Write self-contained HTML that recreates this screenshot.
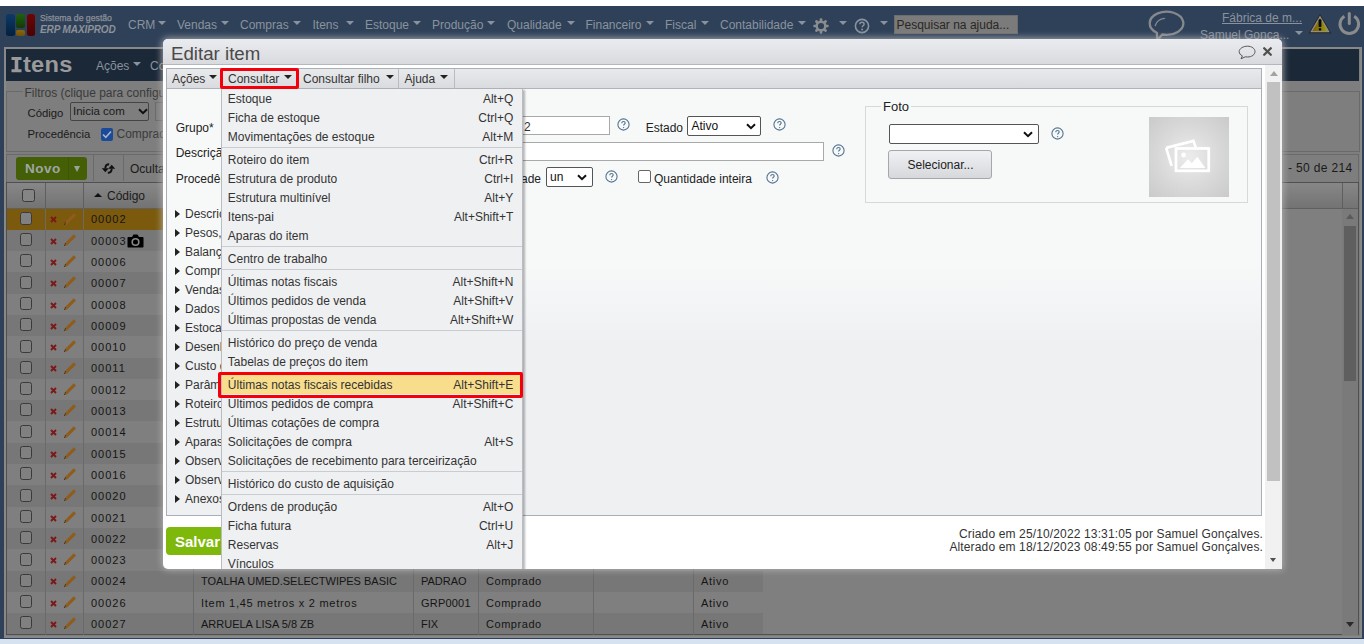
<!DOCTYPE html>
<html><head><meta charset="utf-8">
<style>
*{box-sizing:border-box;margin:0;padding:0}
html,body{width:1364px;height:644px;overflow:hidden;background:#fff;font-family:"Liberation Sans",sans-serif;font-size:12px;color:#222}
.a{position:absolute}
.nw{white-space:nowrap}
#navy{left:0;top:6px;width:1364px;height:633px;background:#2f4159}
#btm{left:0;top:639px;width:1364px;height:5px;background:#d7e2f1}
.tri{display:inline-block;width:0;height:0;border-left:4.5px solid transparent;border-right:4.5px solid transparent;border-top:5px solid currentColor;vertical-align:middle}
.nav{top:18px;font-size:12px;color:#8a939d;line-height:14px}
.navtri{top:21px;width:0;height:0;border-left:4.5px solid transparent;border-right:4.5px solid transparent;border-top:4.5px solid #8a939d}
</style></head><body>
<div class="a" id="navy"></div>
<div class="a" id="btm"></div>

<!-- logo -->
<div class="a" style="left:6px;top:14px;width:8.6px;height:22px;background:linear-gradient(#0c3a68,#03203e);border-radius:2.5px"></div>
<div class="a" style="left:16.3px;top:14px;width:8.7px;height:14px;background:linear-gradient(#225e10,#143a07);border-radius:2.5px"></div>
<div class="a" style="left:16.3px;top:30px;width:8.7px;height:6px;background:linear-gradient(#8a680c,#6f5206);border-radius:2px"></div>
<div class="a" style="left:26.7px;top:14px;width:8.4px;height:22px;background:linear-gradient(#6e0505,#4a0202);border-radius:2.5px"></div>
<div class="a nw" style="left:40px;top:12.5px;font-size:8.7px;color:#8d9198;line-height:10px;-webkit-text-stroke:0.25px #8d9198">Sistema de gestão</div>
<div class="a nw" style="left:40px;top:23.5px;font-size:10px;font-weight:bold;font-style:italic;color:#8d9198;line-height:12px;letter-spacing:-0.1px">ERP MAXIPROD</div>
<!-- nav -->
<div class="a nav nw" style="left:128px">CRM</div><div class="a navtri" style="left:157.5px"></div>
<div class="a nav nw" style="left:177px">Vendas</div><div class="a navtri" style="left:220.5px"></div>
<div class="a nav nw" style="left:240px">Compras</div><div class="a navtri" style="left:293px"></div>
<div class="a nav nw" style="left:312.5px">Itens</div><div class="a navtri" style="left:345.5px"></div>
<div class="a nav nw" style="left:365px">Estoque</div><div class="a navtri" style="left:412.5px"></div>
<div class="a nav nw" style="left:432px">Produção</div><div class="a navtri" style="left:487px"></div>
<div class="a nav nw" style="left:507px">Qualidade</div><div class="a navtri" style="left:566.5px"></div>
<div class="a nav nw" style="left:585.5px">Financeiro</div><div class="a navtri" style="left:645.5px"></div>
<div class="a nav nw" style="left:665px">Fiscal</div><div class="a navtri" style="left:700.5px"></div>
<div class="a nav nw" style="left:720px">Contabilidade</div><div class="a navtri" style="left:797.5px"></div>

<!-- gear -->
<svg class="a" style="left:812px;top:17px" width="18" height="18" viewBox="0 0 18 18"><circle cx="9" cy="9" r="4.3" fill="none" stroke="#8a8d90" stroke-width="2.4"/><rect x="7.7" y="1.3" width="2.6" height="3.6" rx="1" fill="#8a8d90"/><rect x="7.7" y="1.3" width="2.6" height="3.6" rx="1" fill="#8a8d90" transform="rotate(45 9 9)"/><rect x="7.7" y="1.3" width="2.6" height="3.6" rx="1" fill="#8a8d90" transform="rotate(90 9 9)"/><rect x="7.7" y="1.3" width="2.6" height="3.6" rx="1" fill="#8a8d90" transform="rotate(135 9 9)"/><rect x="7.7" y="1.3" width="2.6" height="3.6" rx="1" fill="#8a8d90" transform="rotate(180 9 9)"/><rect x="7.7" y="1.3" width="2.6" height="3.6" rx="1" fill="#8a8d90" transform="rotate(225 9 9)"/><rect x="7.7" y="1.3" width="2.6" height="3.6" rx="1" fill="#8a8d90" transform="rotate(270 9 9)"/><rect x="7.7" y="1.3" width="2.6" height="3.6" rx="1" fill="#8a8d90" transform="rotate(315 9 9)"/></svg>
<div class="a navtri" style="left:838.7px"></div>
<svg class="a" style="left:854px;top:18px" width="16" height="16" viewBox="0 0 16 16"><circle cx="8" cy="8" r="6.6" fill="none" stroke="#8a939d" stroke-width="1.6"/><path d="M5.9 6.3c0-1.3 1-2.1 2.1-2.1s2.1.8 2.1 2c0 1.5-2 1.6-2 3.1" fill="none" stroke="#8a939d" stroke-width="1.5"/><circle cx="8.1" cy="11.6" r="1" fill="#8a939d"/></svg>
<div class="a navtri" style="left:879.5px"></div>
<div class="a nw" style="left:894px;top:15px;width:124px;height:19px;background:#7b7b7b;border:1px solid #6d6d6d;font-size:12px;line-height:18px;padding-left:1.5px;color:#2a2722">Pesquisar na ajuda...</div>

<!-- chat bubble top -->
<svg class="a" style="left:1146px;top:8px" width="42" height="34" viewBox="0 0 42 34"><path d="M10.9 24.8A16.8 11.6 0 1 1 16.2 26.5L11.2 32.5z" fill="none" stroke="#85898d" stroke-width="2.3" stroke-linejoin="round"/><path d="M9.3 17.5C10.5 13.5 14 11 18.5 10.4" fill="none" stroke="#85898d" stroke-width="1.4" stroke-linecap="round"/></svg>
<div class="a nw" style="left:1222px;top:11px;font-size:12px;color:#8a939d;text-decoration:underline;line-height:14px">Fábrica de m...</div>
<div class="a nw" style="left:1200px;top:28px;font-size:12px;color:#8a939d;line-height:14px">Samuel Gonça...</div>
<div class="a navtri" style="left:1295px;top:31px"></div>
<svg class="a" style="left:1308px;top:12.5px" width="24" height="21" viewBox="0 0 24 21"><defs><linearGradient id="wg" x1="0" x2="1" y1="0" y2="0"><stop offset="0" stop-color="#7d5a06"/><stop offset="1" stop-color="#9a9e08"/></linearGradient></defs><path d="M12 1L23.3 20.2H0.7z" fill="#222" /><path d="M12 2.6L21.8 19.3H2.2z" fill="#8f8f86"/><path d="M12 5L19.6 18.1H4.4z" fill="url(#wg)"/><rect x="10.6" y="6.3" width="2.8" height="7.6" rx=".6" fill="#080808"/><rect x="10.8" y="15.2" width="2.4" height="2.3" fill="#080808"/></svg>
<svg class="a" style="left:1337px;top:12px" width="25" height="25" viewBox="0 0 25 25"><path d="M7.4 4.3A9.3 9.3 0 1 0 17.2 4.3" fill="none" stroke="#8a8b8c" stroke-width="3"/><path d="M12.3 1.6v10" stroke="#8a8b8c" stroke-width="3" stroke-linecap="round"/></svg>

<!-- main panel -->
<div class="a" style="left:3.5px;top:46.5px;width:1358px;height:591px;background:#7e7e7e;border:2.5px solid #888"></div>
<div class="a" style="left:6px;top:49px;width:1353px;height:32px;background:#1b2838"></div>
<svg class="a" style="left:11px;top:57.2px" width="11" height="16" viewBox="0 0 11 16"><path d="M0.5 0h10v2.9H7.3v9.4h3.2v2.9h-10v-2.9h3.2V2.9H0.5z" fill="#9a9a9a"/></svg>
<div class="a nw" style="left:22.5px;top:52.7px;font-size:21.5px;font-weight:bold;color:#9a9a9a;line-height:24px;letter-spacing:0.2px;transform:scaleX(1.1);transform-origin:0 0">tens</div>
<div class="a nw" style="left:96px;top:59px;font-size:12px;color:#8a939d;line-height:14px">Ações</div><div class="a navtri" style="left:132.8px;top:62px;border-left-width:4.2px;border-right-width:4.2px;border-top-width:4.3px"></div>
<div class="a nw" style="left:150px;top:59px;font-size:12px;color:#8a939d;line-height:14px">Consultar</div>

<!-- filters -->
<div class="a" style="left:6px;top:91px;width:1354px;height:60.5px;border:1px solid #6a6a6a"></div>
<div class="a nw" style="left:22.5px;top:87.3px;font-size:12px;color:#3a3a3a;background:#7e7e7e;padding:0 2px;line-height:13px">Filtros (clique para configurar)</div>
<div class="a nw" style="left:27.5px;top:107px;color:#1a1a1a;line-height:13px;font-size:11.3px">Código</div>
<div class="a" style="left:69.5px;top:101.5px;width:79px;height:19px;border:1px solid #444;border-radius:2px;background:#7e7e7e"></div>
<div class="a nw" style="left:73px;top:105px;color:#1a1a1a;line-height:13px;font-size:11.5px">Inicia com</div>
<div class="a" style="left:154.5px;top:101.5px;width:100px;height:19px;border:1px solid #6a6a6a;background:#7e7e7e"></div>
<div class="a nw" style="left:27.5px;top:128px;color:#1a1a1a;line-height:13px;font-size:11.3px">Procedência</div>
<div class="a" style="left:100.5px;top:128px;width:12.5px;height:13px;background:#1b4a9a;border-radius:2px"></div>
<div class="a nw" style="left:116.5px;top:128px;color:#3a3a3a;line-height:13px">Comprado</div>
<svg class="a" style="left:102px;top:130px" width="10" height="9" viewBox="0 0 10 9"><path d="M1 4.5l2.8 2.8L9 1.5" fill="none" stroke="#aab4c4" stroke-width="1.6"/></svg>
<svg class="a" style="left:138px;top:108px" width="10" height="7" viewBox="0 0 10 7"><path d="M1 1.2l4 4 4-4" fill="none" stroke="#111" stroke-width="2"/></svg>

<!-- toolbar -->
<div class="a" style="left:6px;top:154px;width:1353px;height:28.5px;border:1px solid #6a6a6a;border-bottom:none"></div>
<div class="a" style="left:16px;top:157px;width:71px;height:23px;background:#445f06;border-radius:3px"></div>
<div class="a" style="left:67.5px;top:157px;width:1px;height:23px;background:#3c5506"></div>
<div class="a nw" style="left:25px;top:161px;font-size:13.5px;font-weight:bold;color:#a0a6a6;line-height:15px;letter-spacing:0.5px">Novo</div>
<div class="a" style="left:73.5px;top:166px;width:0;height:0;border-left:3.5px solid transparent;border-right:3.5px solid transparent;border-top:6px solid #9aa39a"></div>
<div class="a" style="left:93px;top:155px;width:1px;height:26px;background:#6a6a6a"></div>
<div class="a" style="left:123px;top:155px;width:1px;height:26px;background:#6a6a6a"></div>
<svg class="a" style="left:100.5px;top:162.5px" width="15" height="11" viewBox="0 0 15 11"><path d="M8.2 1.3C5.6 1.3 4.3 2.6 4.3 5.6" fill="none" stroke="#111" stroke-width="1.9"/><path d="M0.8 5.2h7L4.3 9.2z" fill="#111"/><path d="M6.8 9.7c2.6 0 3.9-1.3 3.9-4.3" fill="none" stroke="#111" stroke-width="1.9"/><path d="M7.2 5.8h7L10.7 1.8z" fill="#111"/></svg>
<div class="a nw" style="left:130px;top:162px;font-size:12px;color:#1a1a1a;line-height:14px">Ocultar</div>
<div class="a nw" style="left:1288px;top:160.5px;font-size:12px;color:#1a1a1a;line-height:14px;letter-spacing:0.35px">- 50 de 214</div>
<div class="a nw" style="left:1275px;top:160.5px;font-size:12px;color:#1a1a1a;line-height:14px">1</div>
<div class="a" style="left:6px;top:182px;width:1353px;height:453px;border:1px solid #505050;background:#7f7f7f"></div>
<div class="a" style="left:7px;top:183px;width:1351px;height:25.5px;background:linear-gradient(#878787,#737373);border-bottom:1px solid #5f5f5f"></div>
<div class="a" style="left:45px;top:183px;width:1px;height:25px;background:#5f5f5f"></div>
<div class="a" style="left:83px;top:183px;width:1px;height:25px;background:#5f5f5f"></div>
<div class="a" style="left:1342px;top:183px;width:1px;height:25px;background:#5f5f5f"></div>
<div class="a" style="left:22px;top:189px;width:13px;height:13px;border:1px solid #3a3a3a;border-radius:2.5px;background:#858585"></div>
<div class="a" style="left:94px;top:193px;width:0;height:0;border-left:4px solid transparent;border-right:4px solid transparent;border-bottom:4.5px solid #111"></div>
<div class="a nw" style="left:107px;top:189px;font-size:12px;color:#1a1a1a;line-height:14px">Código</div>
<div class="a" style="left:7px;top:208.50px;width:756px;height:21.3px;background:#7c5a0d"></div>
<div class="a" style="left:19.5px;top:211.70px;width:12.5px;height:13px;border:1px solid #3a3a3a;border-radius:2.5px;background:#808080"></div>
<svg class="a" style="left:49.5px;top:216.30px" width="7" height="7" viewBox="0 0 7 7"><path d="M1 1L6 6M6 1L1 6" stroke="#7e1818" stroke-width="1.9"/></svg>
<svg class="a" style="left:62px;top:211.50px" width="15" height="15" viewBox="0 0 15 15"><path d="M11.8 1.2l2.2 2.2-8.8 8.8-2.9.9.8-3z" fill="#8f5c1c"/><path d="M2.3 13.1l.8-3 .7.7z" fill="#222"/><path d="M2.3 13.1l.3-1.1.8.8z" fill="#111"/></svg>
<div class="a nw" style="left:91px;top:213.30px;font-size:11px;color:#151515;line-height:13px;letter-spacing:1.0px">00002</div>
<div class="a" style="left:7px;top:229.80px;width:756px;height:21.3px;background:#777777"></div>
<div class="a" style="left:19.5px;top:233.00px;width:12.5px;height:13px;border:1px solid #3a3a3a;border-radius:2.5px;background:#808080"></div>
<svg class="a" style="left:49.5px;top:237.60px" width="7" height="7" viewBox="0 0 7 7"><path d="M1 1L6 6M6 1L1 6" stroke="#7e1818" stroke-width="1.9"/></svg>
<svg class="a" style="left:62px;top:232.80px" width="15" height="15" viewBox="0 0 15 15"><path d="M11.8 1.2l2.2 2.2-8.8 8.8-2.9.9.8-3z" fill="#8f5c1c"/><path d="M2.3 13.1l.8-3 .7.7z" fill="#222"/><path d="M2.3 13.1l.3-1.1.8.8z" fill="#111"/></svg>
<div class="a nw" style="left:91px;top:234.60px;font-size:11px;color:#151515;line-height:13px;letter-spacing:1.0px">00003</div>
<div class="a" style="left:19.5px;top:254.30px;width:12.5px;height:13px;border:1px solid #3a3a3a;border-radius:2.5px;background:#808080"></div>
<svg class="a" style="left:49.5px;top:258.90px" width="7" height="7" viewBox="0 0 7 7"><path d="M1 1L6 6M6 1L1 6" stroke="#7e1818" stroke-width="1.9"/></svg>
<svg class="a" style="left:62px;top:254.10px" width="15" height="15" viewBox="0 0 15 15"><path d="M11.8 1.2l2.2 2.2-8.8 8.8-2.9.9.8-3z" fill="#8f5c1c"/><path d="M2.3 13.1l.8-3 .7.7z" fill="#222"/><path d="M2.3 13.1l.3-1.1.8.8z" fill="#111"/></svg>
<div class="a nw" style="left:91px;top:255.90px;font-size:11px;color:#151515;line-height:13px;letter-spacing:1.0px">00006</div>
<div class="a" style="left:7px;top:272.40px;width:756px;height:21.3px;background:#777777"></div>
<div class="a" style="left:19.5px;top:275.60px;width:12.5px;height:13px;border:1px solid #3a3a3a;border-radius:2.5px;background:#808080"></div>
<svg class="a" style="left:49.5px;top:280.20px" width="7" height="7" viewBox="0 0 7 7"><path d="M1 1L6 6M6 1L1 6" stroke="#7e1818" stroke-width="1.9"/></svg>
<svg class="a" style="left:62px;top:275.40px" width="15" height="15" viewBox="0 0 15 15"><path d="M11.8 1.2l2.2 2.2-8.8 8.8-2.9.9.8-3z" fill="#8f5c1c"/><path d="M2.3 13.1l.8-3 .7.7z" fill="#222"/><path d="M2.3 13.1l.3-1.1.8.8z" fill="#111"/></svg>
<div class="a nw" style="left:91px;top:277.20px;font-size:11px;color:#151515;line-height:13px;letter-spacing:1.0px">00007</div>
<div class="a" style="left:19.5px;top:296.90px;width:12.5px;height:13px;border:1px solid #3a3a3a;border-radius:2.5px;background:#808080"></div>
<svg class="a" style="left:49.5px;top:301.50px" width="7" height="7" viewBox="0 0 7 7"><path d="M1 1L6 6M6 1L1 6" stroke="#7e1818" stroke-width="1.9"/></svg>
<svg class="a" style="left:62px;top:296.70px" width="15" height="15" viewBox="0 0 15 15"><path d="M11.8 1.2l2.2 2.2-8.8 8.8-2.9.9.8-3z" fill="#8f5c1c"/><path d="M2.3 13.1l.8-3 .7.7z" fill="#222"/><path d="M2.3 13.1l.3-1.1.8.8z" fill="#111"/></svg>
<div class="a nw" style="left:91px;top:298.50px;font-size:11px;color:#151515;line-height:13px;letter-spacing:1.0px">00008</div>
<div class="a" style="left:7px;top:315.00px;width:756px;height:21.3px;background:#777777"></div>
<div class="a" style="left:19.5px;top:318.20px;width:12.5px;height:13px;border:1px solid #3a3a3a;border-radius:2.5px;background:#808080"></div>
<svg class="a" style="left:49.5px;top:322.80px" width="7" height="7" viewBox="0 0 7 7"><path d="M1 1L6 6M6 1L1 6" stroke="#7e1818" stroke-width="1.9"/></svg>
<svg class="a" style="left:62px;top:318.00px" width="15" height="15" viewBox="0 0 15 15"><path d="M11.8 1.2l2.2 2.2-8.8 8.8-2.9.9.8-3z" fill="#8f5c1c"/><path d="M2.3 13.1l.8-3 .7.7z" fill="#222"/><path d="M2.3 13.1l.3-1.1.8.8z" fill="#111"/></svg>
<div class="a nw" style="left:91px;top:319.80px;font-size:11px;color:#151515;line-height:13px;letter-spacing:1.0px">00009</div>
<div class="a" style="left:19.5px;top:339.50px;width:12.5px;height:13px;border:1px solid #3a3a3a;border-radius:2.5px;background:#808080"></div>
<svg class="a" style="left:49.5px;top:344.10px" width="7" height="7" viewBox="0 0 7 7"><path d="M1 1L6 6M6 1L1 6" stroke="#7e1818" stroke-width="1.9"/></svg>
<svg class="a" style="left:62px;top:339.30px" width="15" height="15" viewBox="0 0 15 15"><path d="M11.8 1.2l2.2 2.2-8.8 8.8-2.9.9.8-3z" fill="#8f5c1c"/><path d="M2.3 13.1l.8-3 .7.7z" fill="#222"/><path d="M2.3 13.1l.3-1.1.8.8z" fill="#111"/></svg>
<div class="a nw" style="left:91px;top:341.10px;font-size:11px;color:#151515;line-height:13px;letter-spacing:1.0px">00010</div>
<div class="a" style="left:7px;top:357.60px;width:756px;height:21.3px;background:#777777"></div>
<div class="a" style="left:19.5px;top:360.80px;width:12.5px;height:13px;border:1px solid #3a3a3a;border-radius:2.5px;background:#808080"></div>
<svg class="a" style="left:49.5px;top:365.40px" width="7" height="7" viewBox="0 0 7 7"><path d="M1 1L6 6M6 1L1 6" stroke="#7e1818" stroke-width="1.9"/></svg>
<svg class="a" style="left:62px;top:360.60px" width="15" height="15" viewBox="0 0 15 15"><path d="M11.8 1.2l2.2 2.2-8.8 8.8-2.9.9.8-3z" fill="#8f5c1c"/><path d="M2.3 13.1l.8-3 .7.7z" fill="#222"/><path d="M2.3 13.1l.3-1.1.8.8z" fill="#111"/></svg>
<div class="a nw" style="left:91px;top:362.40px;font-size:11px;color:#151515;line-height:13px;letter-spacing:1.0px">00011</div>
<div class="a" style="left:19.5px;top:382.10px;width:12.5px;height:13px;border:1px solid #3a3a3a;border-radius:2.5px;background:#808080"></div>
<svg class="a" style="left:49.5px;top:386.70px" width="7" height="7" viewBox="0 0 7 7"><path d="M1 1L6 6M6 1L1 6" stroke="#7e1818" stroke-width="1.9"/></svg>
<svg class="a" style="left:62px;top:381.90px" width="15" height="15" viewBox="0 0 15 15"><path d="M11.8 1.2l2.2 2.2-8.8 8.8-2.9.9.8-3z" fill="#8f5c1c"/><path d="M2.3 13.1l.8-3 .7.7z" fill="#222"/><path d="M2.3 13.1l.3-1.1.8.8z" fill="#111"/></svg>
<div class="a nw" style="left:91px;top:383.70px;font-size:11px;color:#151515;line-height:13px;letter-spacing:1.0px">00012</div>
<div class="a" style="left:7px;top:400.20px;width:756px;height:21.3px;background:#777777"></div>
<div class="a" style="left:19.5px;top:403.40px;width:12.5px;height:13px;border:1px solid #3a3a3a;border-radius:2.5px;background:#808080"></div>
<svg class="a" style="left:49.5px;top:408.00px" width="7" height="7" viewBox="0 0 7 7"><path d="M1 1L6 6M6 1L1 6" stroke="#7e1818" stroke-width="1.9"/></svg>
<svg class="a" style="left:62px;top:403.20px" width="15" height="15" viewBox="0 0 15 15"><path d="M11.8 1.2l2.2 2.2-8.8 8.8-2.9.9.8-3z" fill="#8f5c1c"/><path d="M2.3 13.1l.8-3 .7.7z" fill="#222"/><path d="M2.3 13.1l.3-1.1.8.8z" fill="#111"/></svg>
<div class="a nw" style="left:91px;top:405.00px;font-size:11px;color:#151515;line-height:13px;letter-spacing:1.0px">00013</div>
<div class="a" style="left:19.5px;top:424.70px;width:12.5px;height:13px;border:1px solid #3a3a3a;border-radius:2.5px;background:#808080"></div>
<svg class="a" style="left:49.5px;top:429.30px" width="7" height="7" viewBox="0 0 7 7"><path d="M1 1L6 6M6 1L1 6" stroke="#7e1818" stroke-width="1.9"/></svg>
<svg class="a" style="left:62px;top:424.50px" width="15" height="15" viewBox="0 0 15 15"><path d="M11.8 1.2l2.2 2.2-8.8 8.8-2.9.9.8-3z" fill="#8f5c1c"/><path d="M2.3 13.1l.8-3 .7.7z" fill="#222"/><path d="M2.3 13.1l.3-1.1.8.8z" fill="#111"/></svg>
<div class="a nw" style="left:91px;top:426.30px;font-size:11px;color:#151515;line-height:13px;letter-spacing:1.0px">00014</div>
<div class="a" style="left:7px;top:442.80px;width:756px;height:21.3px;background:#777777"></div>
<div class="a" style="left:19.5px;top:446.00px;width:12.5px;height:13px;border:1px solid #3a3a3a;border-radius:2.5px;background:#808080"></div>
<svg class="a" style="left:49.5px;top:450.60px" width="7" height="7" viewBox="0 0 7 7"><path d="M1 1L6 6M6 1L1 6" stroke="#7e1818" stroke-width="1.9"/></svg>
<svg class="a" style="left:62px;top:445.80px" width="15" height="15" viewBox="0 0 15 15"><path d="M11.8 1.2l2.2 2.2-8.8 8.8-2.9.9.8-3z" fill="#8f5c1c"/><path d="M2.3 13.1l.8-3 .7.7z" fill="#222"/><path d="M2.3 13.1l.3-1.1.8.8z" fill="#111"/></svg>
<div class="a nw" style="left:91px;top:447.60px;font-size:11px;color:#151515;line-height:13px;letter-spacing:1.0px">00015</div>
<div class="a" style="left:19.5px;top:467.30px;width:12.5px;height:13px;border:1px solid #3a3a3a;border-radius:2.5px;background:#808080"></div>
<svg class="a" style="left:49.5px;top:471.90px" width="7" height="7" viewBox="0 0 7 7"><path d="M1 1L6 6M6 1L1 6" stroke="#7e1818" stroke-width="1.9"/></svg>
<svg class="a" style="left:62px;top:467.10px" width="15" height="15" viewBox="0 0 15 15"><path d="M11.8 1.2l2.2 2.2-8.8 8.8-2.9.9.8-3z" fill="#8f5c1c"/><path d="M2.3 13.1l.8-3 .7.7z" fill="#222"/><path d="M2.3 13.1l.3-1.1.8.8z" fill="#111"/></svg>
<div class="a nw" style="left:91px;top:468.90px;font-size:11px;color:#151515;line-height:13px;letter-spacing:1.0px">00016</div>
<div class="a" style="left:7px;top:485.40px;width:756px;height:21.3px;background:#777777"></div>
<div class="a" style="left:19.5px;top:488.60px;width:12.5px;height:13px;border:1px solid #3a3a3a;border-radius:2.5px;background:#808080"></div>
<svg class="a" style="left:49.5px;top:493.20px" width="7" height="7" viewBox="0 0 7 7"><path d="M1 1L6 6M6 1L1 6" stroke="#7e1818" stroke-width="1.9"/></svg>
<svg class="a" style="left:62px;top:488.40px" width="15" height="15" viewBox="0 0 15 15"><path d="M11.8 1.2l2.2 2.2-8.8 8.8-2.9.9.8-3z" fill="#8f5c1c"/><path d="M2.3 13.1l.8-3 .7.7z" fill="#222"/><path d="M2.3 13.1l.3-1.1.8.8z" fill="#111"/></svg>
<div class="a nw" style="left:91px;top:490.20px;font-size:11px;color:#151515;line-height:13px;letter-spacing:1.0px">00020</div>
<div class="a" style="left:19.5px;top:509.90px;width:12.5px;height:13px;border:1px solid #3a3a3a;border-radius:2.5px;background:#808080"></div>
<svg class="a" style="left:49.5px;top:514.50px" width="7" height="7" viewBox="0 0 7 7"><path d="M1 1L6 6M6 1L1 6" stroke="#7e1818" stroke-width="1.9"/></svg>
<svg class="a" style="left:62px;top:509.70px" width="15" height="15" viewBox="0 0 15 15"><path d="M11.8 1.2l2.2 2.2-8.8 8.8-2.9.9.8-3z" fill="#8f5c1c"/><path d="M2.3 13.1l.8-3 .7.7z" fill="#222"/><path d="M2.3 13.1l.3-1.1.8.8z" fill="#111"/></svg>
<div class="a nw" style="left:91px;top:511.50px;font-size:11px;color:#151515;line-height:13px;letter-spacing:1.0px">00021</div>
<div class="a" style="left:7px;top:528.00px;width:756px;height:21.3px;background:#777777"></div>
<div class="a" style="left:19.5px;top:531.20px;width:12.5px;height:13px;border:1px solid #3a3a3a;border-radius:2.5px;background:#808080"></div>
<svg class="a" style="left:49.5px;top:535.80px" width="7" height="7" viewBox="0 0 7 7"><path d="M1 1L6 6M6 1L1 6" stroke="#7e1818" stroke-width="1.9"/></svg>
<svg class="a" style="left:62px;top:531.00px" width="15" height="15" viewBox="0 0 15 15"><path d="M11.8 1.2l2.2 2.2-8.8 8.8-2.9.9.8-3z" fill="#8f5c1c"/><path d="M2.3 13.1l.8-3 .7.7z" fill="#222"/><path d="M2.3 13.1l.3-1.1.8.8z" fill="#111"/></svg>
<div class="a nw" style="left:91px;top:532.80px;font-size:11px;color:#151515;line-height:13px;letter-spacing:1.0px">00022</div>
<div class="a" style="left:19.5px;top:552.50px;width:12.5px;height:13px;border:1px solid #3a3a3a;border-radius:2.5px;background:#808080"></div>
<svg class="a" style="left:49.5px;top:557.10px" width="7" height="7" viewBox="0 0 7 7"><path d="M1 1L6 6M6 1L1 6" stroke="#7e1818" stroke-width="1.9"/></svg>
<svg class="a" style="left:62px;top:552.30px" width="15" height="15" viewBox="0 0 15 15"><path d="M11.8 1.2l2.2 2.2-8.8 8.8-2.9.9.8-3z" fill="#8f5c1c"/><path d="M2.3 13.1l.8-3 .7.7z" fill="#222"/><path d="M2.3 13.1l.3-1.1.8.8z" fill="#111"/></svg>
<div class="a nw" style="left:91px;top:554.10px;font-size:11px;color:#151515;line-height:13px;letter-spacing:1.0px">00023</div>
<div class="a" style="left:7px;top:570.60px;width:756px;height:21.3px;background:#777777"></div>
<div class="a" style="left:19.5px;top:573.80px;width:12.5px;height:13px;border:1px solid #3a3a3a;border-radius:2.5px;background:#808080"></div>
<svg class="a" style="left:49.5px;top:578.40px" width="7" height="7" viewBox="0 0 7 7"><path d="M1 1L6 6M6 1L1 6" stroke="#7e1818" stroke-width="1.9"/></svg>
<svg class="a" style="left:62px;top:573.60px" width="15" height="15" viewBox="0 0 15 15"><path d="M11.8 1.2l2.2 2.2-8.8 8.8-2.9.9.8-3z" fill="#8f5c1c"/><path d="M2.3 13.1l.8-3 .7.7z" fill="#222"/><path d="M2.3 13.1l.3-1.1.8.8z" fill="#111"/></svg>
<div class="a nw" style="left:91px;top:575.40px;font-size:11px;color:#151515;line-height:13px;letter-spacing:1.0px">00024</div>
<div class="a nw" style="left:201px;top:575.40px;font-size:11px;color:#151515;line-height:13px">TOALHA UMED.SELECTWIPES BASIC</div>
<div class="a nw" style="left:421px;top:575.40px;font-size:11px;color:#151515;line-height:13px">PADRAO</div>
<div class="a nw" style="left:486px;top:575.40px;font-size:11px;color:#151515;line-height:13px;letter-spacing:0.55px">Comprado</div>
<div class="a nw" style="left:701px;top:575.40px;font-size:11px;color:#151515;line-height:13px;letter-spacing:0.7px">Ativo</div>
<div class="a" style="left:19.5px;top:595.10px;width:12.5px;height:13px;border:1px solid #3a3a3a;border-radius:2.5px;background:#808080"></div>
<svg class="a" style="left:49.5px;top:599.70px" width="7" height="7" viewBox="0 0 7 7"><path d="M1 1L6 6M6 1L1 6" stroke="#7e1818" stroke-width="1.9"/></svg>
<svg class="a" style="left:62px;top:594.90px" width="15" height="15" viewBox="0 0 15 15"><path d="M11.8 1.2l2.2 2.2-8.8 8.8-2.9.9.8-3z" fill="#8f5c1c"/><path d="M2.3 13.1l.8-3 .7.7z" fill="#222"/><path d="M2.3 13.1l.3-1.1.8.8z" fill="#111"/></svg>
<div class="a nw" style="left:91px;top:596.70px;font-size:11px;color:#151515;line-height:13px;letter-spacing:1.0px">00026</div>
<div class="a nw" style="left:201px;top:596.70px;font-size:11px;color:#151515;line-height:13px;letter-spacing:0.72px">Item 1,45 metros x 2 metros</div>
<div class="a nw" style="left:421px;top:596.70px;font-size:11px;color:#151515;line-height:13px;letter-spacing:0.2px">GRP0001</div>
<div class="a nw" style="left:486px;top:596.70px;font-size:11px;color:#151515;line-height:13px;letter-spacing:0.55px">Comprado</div>
<div class="a nw" style="left:701px;top:596.70px;font-size:11px;color:#151515;line-height:13px;letter-spacing:0.7px">Ativo</div>
<div class="a" style="left:7px;top:613.20px;width:756px;height:21.3px;background:#777777"></div>
<div class="a" style="left:19.5px;top:616.40px;width:12.5px;height:13px;border:1px solid #3a3a3a;border-radius:2.5px;background:#808080"></div>
<svg class="a" style="left:49.5px;top:621.00px" width="7" height="7" viewBox="0 0 7 7"><path d="M1 1L6 6M6 1L1 6" stroke="#7e1818" stroke-width="1.9"/></svg>
<svg class="a" style="left:62px;top:616.20px" width="15" height="15" viewBox="0 0 15 15"><path d="M11.8 1.2l2.2 2.2-8.8 8.8-2.9.9.8-3z" fill="#8f5c1c"/><path d="M2.3 13.1l.8-3 .7.7z" fill="#222"/><path d="M2.3 13.1l.3-1.1.8.8z" fill="#111"/></svg>
<div class="a nw" style="left:91px;top:618.00px;font-size:11px;color:#151515;line-height:13px;letter-spacing:1.0px">00027</div>
<div class="a nw" style="left:201px;top:618.00px;font-size:11px;color:#151515;line-height:13px">ARRUELA LISA 5/8 ZB</div>
<div class="a nw" style="left:421px;top:618.00px;font-size:11px;color:#151515;line-height:13px">FIX</div>
<div class="a nw" style="left:486px;top:618.00px;font-size:11px;color:#151515;line-height:13px;letter-spacing:0.55px">Comprado</div>
<div class="a nw" style="left:701px;top:618.00px;font-size:11px;color:#151515;line-height:13px;letter-spacing:0.7px">Ativo</div>
<div class="a" style="left:45px;top:208.5px;width:1px;height:426px;background:#6a6a6a"></div>
<div class="a" style="left:83px;top:208.5px;width:1px;height:426px;background:#6a6a6a"></div>
<div class="a" style="left:193px;top:208.5px;width:1px;height:426px;background:#6a6a6a"></div>
<div class="a" style="left:413px;top:208.5px;width:1px;height:426px;background:#6a6a6a"></div>
<div class="a" style="left:478px;top:208.5px;width:1px;height:426px;background:#6a6a6a"></div>
<div class="a" style="left:593px;top:208.5px;width:1px;height:426px;background:#6a6a6a"></div>
<div class="a" style="left:693px;top:208.5px;width:1px;height:426px;background:#6a6a6a"></div>
<svg class="a" style="left:127px;top:234px" width="17" height="14" viewBox="0 0 17 14"><path d="M1.5 3h3.5l1.5-2.5h4L12 3h3.5c.6 0 1 .4 1 1v8.5c0 .6-.4 1-1 1h-14c-.6 0-1-.4-1-1V4c0-.6.4-1 1-1z" fill="#000"/><circle cx="8.5" cy="8" r="3.3" fill="none" stroke="#8a8a8a" stroke-width="1.6"/></svg>
<div class="a" style="left:1342px;top:208.5px;width:16px;height:426px;background:#7a7a7a"></div>
<div class="a" style="left:1346px;top:214px;width:0;height:0;border-left:4px solid transparent;border-right:4px solid transparent;border-bottom:5px solid #5a5a5a"></div>
<div class="a" style="left:1344px;top:226px;width:12px;height:155px;background:#5f5f5f"></div>
<div class="a" style="left:1346px;top:622px;width:0;height:0;border-left:4px solid transparent;border-right:4px solid transparent;border-top:5px solid #2a2a2a"></div>
<!-- modal -->
<div class="a" id="modal" style="left:163px;top:39px;width:1119px;height:530px;background:#fff;border-radius:5px 5px 0 5px;box-shadow:0 0 7px 1px rgba(185,185,185,.85);overflow:hidden">
 <div class="a" style="left:0;top:0;width:1119px;height:26px;background:linear-gradient(#ebecef,#d8dadd);border-bottom:1px solid #b3b8be"></div>
 <div class="a nw" style="left:8px;top:4.3px;font-size:18.7px;color:#4a4a4a;line-height:22px">Editar item</div>
 <svg class="a" style="left:1075px;top:6px" width="18" height="15" viewBox="0 0 18 15"><path d="M9.5 1.2c4.3 0 7.5 2.4 7.5 5.4s-3.2 5.4-7.5 5.4c-.8 0-1.5-.1-2.2-.2L3 13.8l1.4-2.9C2.4 10 1.2 8.4 1.2 6.6 1.2 3.6 5 1.2 9.5 1.2z" fill="none" stroke="#555" stroke-width="1"/></svg>
 <svg class="a" style="left:1098.5px;top:7.3px" width="11" height="11" viewBox="0 0 11 11"><path d="M2.2 2.2l6.6 6.6M8.8 2.2l-6.6 6.6" stroke="#505050" stroke-width="2.3" stroke-linecap="round"/></svg>
 <!-- scrollbar -->
 <div class="a" style="left:1102px;top:26px;width:17px;height:504px;background:#f1f1f1"></div>
 <div class="a" style="left:1106.5px;top:32px;width:0;height:0;border-left:4px solid transparent;border-right:4px solid transparent;border-bottom:5px solid #a3a3a3"></div>
 <div class="a" style="left:1104px;top:43px;width:13px;height:399px;background:#c1c1c1"></div>
 <div class="a" style="left:1106.8px;top:518.8px;width:0;height:0;border-left:3.7px solid transparent;border-right:3.7px solid transparent;border-top:4.3px solid #505050"></div>
 <!-- inner container -->
 <div class="a" id="inner" style="left:3px;top:29px;width:1096px;height:447.5px;border:1px solid #a9afb6;background:linear-gradient(#f7f9f9 0,#f7f9f9 195px,#eff0f2 275px,#eff0f2 100%)"></div>
 <div class="a" style="left:4px;top:30px;width:1094px;height:20px;background:linear-gradient(#e9eaec,#d9dbde);border-bottom:1px solid #b0b5bb"></div>
 <div class="a nw" style="left:9px;top:34px;color:#333;line-height:13px">Ações</div>
 <div class="a" style="left:45.5px;top:36.2px;width:0;height:0;border-left:4.5px solid transparent;border-right:4.5px solid transparent;border-top:4.5px solid #222"></div>
 <div class="a" style="left:57px;top:30px;width:1px;height:20px;background:#b8bcc2"></div>
 <div class="a nw" style="left:65px;top:34px;color:#333;line-height:13px">Consultar</div>
 <div class="a" style="left:121px;top:36.2px;width:0;height:0;border-left:4.5px solid transparent;border-right:4.5px solid transparent;border-top:4.5px solid #222"></div>
 <div class="a" style="left:135px;top:30px;width:1px;height:20px;background:#b8bcc2"></div>
 <div class="a nw" style="left:140px;top:34px;color:#333;line-height:13px">Consultar filho</div>
 <div class="a" style="left:222.5px;top:36.2px;width:0;height:0;border-left:4.5px solid transparent;border-right:4.5px solid transparent;border-top:4.5px solid #222"></div>
 <div class="a" style="left:235px;top:30px;width:1px;height:20px;background:#b8bcc2"></div>
 <div class="a nw" style="left:241.5px;top:34px;color:#333;line-height:13px">Ajuda</div>
 <div class="a" style="left:277px;top:36.2px;width:0;height:0;border-left:4.5px solid transparent;border-right:4.5px solid transparent;border-top:4.5px solid #222"></div>
 <div class="a" style="left:290.5px;top:30px;width:1px;height:20px;background:#b8bcc2"></div>

 <div class="a nw" style="left:12.7px;top:82.8px;color:#222;line-height:13px;">Grupo*</div>
 <div class="a nw" style="left:12.7px;top:108.3px;color:#222;line-height:13px;">Descrição</div>
 <div class="a nw" style="left:12.7px;top:134.3px;color:#222;line-height:13px;">Procedência</div>
 <div class="a" style="left:137px;top:77.3px;width:309.5px;height:19px;background:#fff;border:1px solid #a9a9a9"></div>
 <div class="a nw" style="left:361px;top:82.3px;color:#222;line-height:13px;color:#333">2</div>
 <div class="a" style="left:137px;top:102.7px;width:524px;height:19.5px;background:#fff;border:1px solid #a9a9a9"></div>
 <svg class="a" style="left:454.4px;top:79.0px" width="13" height="13" viewBox="0 0 13 13"><circle cx="6.5" cy="6.5" r="5.6" fill="none" stroke="#557390" stroke-width="1.1"/><path d="M4.8 5.2c0-1 .8-1.7 1.7-1.7s1.7.6 1.7 1.6c0 1.2-1.6 1.2-1.6 2.5" fill="none" stroke="#557390" stroke-width="1.1"/><circle cx="6.6" cy="9.6" r=".7" fill="#557390"/></svg>
 <svg class="a" style="left:610.3px;top:79.0px" width="13" height="13" viewBox="0 0 13 13"><circle cx="6.5" cy="6.5" r="5.6" fill="none" stroke="#557390" stroke-width="1.1"/><path d="M4.8 5.2c0-1 .8-1.7 1.7-1.7s1.7.6 1.7 1.6c0 1.2-1.6 1.2-1.6 2.5" fill="none" stroke="#557390" stroke-width="1.1"/><circle cx="6.6" cy="9.6" r=".7" fill="#557390"/></svg>
 <svg class="a" style="left:668.5px;top:105.0px" width="13" height="13" viewBox="0 0 13 13"><circle cx="6.5" cy="6.5" r="5.6" fill="none" stroke="#557390" stroke-width="1.1"/><path d="M4.8 5.2c0-1 .8-1.7 1.7-1.7s1.7.6 1.7 1.6c0 1.2-1.6 1.2-1.6 2.5" fill="none" stroke="#557390" stroke-width="1.1"/><circle cx="6.6" cy="9.6" r=".7" fill="#557390"/></svg>
 <svg class="a" style="left:442.3px;top:131.0px" width="13" height="13" viewBox="0 0 13 13"><circle cx="6.5" cy="6.5" r="5.6" fill="none" stroke="#557390" stroke-width="1.1"/><path d="M4.8 5.2c0-1 .8-1.7 1.7-1.7s1.7.6 1.7 1.6c0 1.2-1.6 1.2-1.6 2.5" fill="none" stroke="#557390" stroke-width="1.1"/><circle cx="6.6" cy="9.6" r=".7" fill="#557390"/></svg>
 <svg class="a" style="left:602.5px;top:131.5px" width="13" height="13" viewBox="0 0 13 13"><circle cx="6.5" cy="6.5" r="5.6" fill="none" stroke="#557390" stroke-width="1.1"/><path d="M4.8 5.2c0-1 .8-1.7 1.7-1.7s1.7.6 1.7 1.6c0 1.2-1.6 1.2-1.6 2.5" fill="none" stroke="#557390" stroke-width="1.1"/><circle cx="6.6" cy="9.6" r=".7" fill="#557390"/></svg>
 <svg class="a" style="left:888.0px;top:87.5px" width="13" height="13" viewBox="0 0 13 13"><circle cx="6.5" cy="6.5" r="5.6" fill="none" stroke="#557390" stroke-width="1.1"/><path d="M4.8 5.2c0-1 .8-1.7 1.7-1.7s1.7.6 1.7 1.6c0 1.2-1.6 1.2-1.6 2.5" fill="none" stroke="#557390" stroke-width="1.1"/><circle cx="6.6" cy="9.6" r=".7" fill="#557390"/></svg>
 <div class="a nw" style="left:482.7px;top:82.5px;color:#222;line-height:13px;">Estado</div>
 <div class="a" style="left:524px;top:77.3px;width:73.5px;height:19.5px;background:#fff;border:1px solid #555;border-radius:2px"></div>
 <div class="a nw" style="left:528.5px;top:81.0px;color:#222;line-height:13px;color:#111">Ativo</div>
 <svg class="a" style="left:582.5px;top:83.5px" width="10" height="7" viewBox="0 0 10 7"><path d="M1 1.2l4 4 4-4" fill="none" stroke="#111" stroke-width="2"/></svg>
 <div class="a nw" style="left:358.0px;top:133.5px;color:#222;line-height:13px;">ade</div>
 <div class="a" style="left:383px;top:128px;width:46.5px;height:19.5px;background:#fff;border:1px solid #555;border-radius:2px"></div>
 <div class="a nw" style="left:387.0px;top:132.0px;color:#222;line-height:13px;color:#111">un</div>
 <svg class="a" style="left:414.0px;top:134.5px" width="10" height="7" viewBox="0 0 10 7"><path d="M1 1.2l4 4 4-4" fill="none" stroke="#111" stroke-width="2"/></svg>
 <div class="a" style="left:475.29999999999995px;top:131.2px;width:12.5px;height:12.5px;background:#fff;border:1px solid #666;border-radius:2px"></div>
 <div class="a nw" style="left:490.9px;top:133.5px;color:#222;line-height:13px;">Quantidade inteira</div>
 <div class="a" style="left:702px;top:67px;width:383px;height:97px;border:1px solid #d6d8da"></div>
 <div class="a nw" style="left:718px;top:61px;padding:0 2px;background:#f7f9f9;font-size:13px;color:#222;line-height:14px">Foto</div>
 <div class="a" style="left:725.8px;top:85.2px;width:150px;height:19.5px;background:#fff;border:1px solid #555;border-radius:2px"></div>
 <svg class="a" style="left:860.0px;top:91.5px" width="10" height="7" viewBox="0 0 10 7"><path d="M1 1.2l4 4 4-4" fill="none" stroke="#111" stroke-width="2"/></svg>
 <div class="a" style="left:725px;top:111px;width:103.5px;height:28.5px;background:linear-gradient(#f0f1f3,#d6d8dc);border:1px solid #a3a8ae;border-radius:3px"></div>
 <div class="a nw" style="left:744.5px;top:120.0px;color:#222;line-height:13px;color:#222">Selecionar...</div>
 <div class="a" style="left:986px;top:77.8px;width:80px;height:80px;background:radial-gradient(circle at 50% 50%,#ececec 0,#d9d9d9 30px,#c8c8c8 60px)"></div>
 <svg class="a" style="left:1001px;top:95.5px" width="48" height="40" viewBox="0 0 44 36"><g fill="none" stroke="#fff" stroke-width="2.5"><path d="M2 11.5l25-6.5 2 6"/><path d="M2 11.5l5 16.5"/><rect x="11" y="12" width="30" height="20.5"/></g><circle cx="18" cy="18" r="2.2" fill="#fff"/><path d="M14.5 30l7.5-8 3.5 3.5 5-6 7.5 10.5z" fill="#fff"/></svg>
 <div class="a" style="left:11.8px;top:170.5px;width:0;height:0;border-top:4.5px solid transparent;border-bottom:4.5px solid transparent;border-left:5px solid #222"></div>
 <div class="a nw" style="left:22.0px;top:168.5px;color:#222;line-height:13px;color:#333">Descrição detalhada</div>
 <div class="a" style="left:11.8px;top:189.5px;width:0;height:0;border-top:4.5px solid transparent;border-bottom:4.5px solid transparent;border-left:5px solid #222"></div>
 <div class="a nw" style="left:22.0px;top:187.5px;color:#222;line-height:13px;color:#333">Pesos, medidas</div>
 <div class="a" style="left:11.8px;top:208.5px;width:0;height:0;border-top:4.5px solid transparent;border-bottom:4.5px solid transparent;border-left:5px solid #222"></div>
 <div class="a nw" style="left:22.0px;top:206.5px;color:#222;line-height:13px;color:#333">Balanço</div>
 <div class="a" style="left:11.8px;top:227.5px;width:0;height:0;border-top:4.5px solid transparent;border-bottom:4.5px solid transparent;border-left:5px solid #222"></div>
 <div class="a nw" style="left:22.0px;top:225.5px;color:#222;line-height:13px;color:#333">Compras</div>
 <div class="a" style="left:11.8px;top:246.5px;width:0;height:0;border-top:4.5px solid transparent;border-bottom:4.5px solid transparent;border-left:5px solid #222"></div>
 <div class="a nw" style="left:22.0px;top:244.5px;color:#222;line-height:13px;color:#333">Vendas</div>
 <div class="a" style="left:11.8px;top:265.5px;width:0;height:0;border-top:4.5px solid transparent;border-bottom:4.5px solid transparent;border-left:5px solid #222"></div>
 <div class="a nw" style="left:22.0px;top:263.5px;color:#222;line-height:13px;color:#333">Dados fiscais</div>
 <div class="a" style="left:11.8px;top:284.5px;width:0;height:0;border-top:4.5px solid transparent;border-bottom:4.5px solid transparent;border-left:5px solid #222"></div>
 <div class="a nw" style="left:22.0px;top:282.5px;color:#222;line-height:13px;color:#333">Estocagem</div>
 <div class="a" style="left:11.8px;top:303.5px;width:0;height:0;border-top:4.5px solid transparent;border-bottom:4.5px solid transparent;border-left:5px solid #222"></div>
 <div class="a nw" style="left:22.0px;top:301.5px;color:#222;line-height:13px;color:#333">Desenho</div>
 <div class="a" style="left:11.8px;top:322.5px;width:0;height:0;border-top:4.5px solid transparent;border-bottom:4.5px solid transparent;border-left:5px solid #222"></div>
 <div class="a nw" style="left:22.0px;top:320.5px;color:#222;line-height:13px;color:#333">Custo de aquisição</div>
 <div class="a" style="left:11.8px;top:341.5px;width:0;height:0;border-top:4.5px solid transparent;border-bottom:4.5px solid transparent;border-left:5px solid #222"></div>
 <div class="a nw" style="left:22.0px;top:339.5px;color:#222;line-height:13px;color:#333">Parâmetros</div>
 <div class="a" style="left:11.8px;top:360.5px;width:0;height:0;border-top:4.5px solid transparent;border-bottom:4.5px solid transparent;border-left:5px solid #222"></div>
 <div class="a nw" style="left:22.0px;top:358.5px;color:#222;line-height:13px;color:#333">Roteiro</div>
 <div class="a" style="left:11.8px;top:379.5px;width:0;height:0;border-top:4.5px solid transparent;border-bottom:4.5px solid transparent;border-left:5px solid #222"></div>
 <div class="a nw" style="left:22.0px;top:377.5px;color:#222;line-height:13px;color:#333">Estrutura</div>
 <div class="a" style="left:11.8px;top:398.5px;width:0;height:0;border-top:4.5px solid transparent;border-bottom:4.5px solid transparent;border-left:5px solid #222"></div>
 <div class="a nw" style="left:22.0px;top:396.5px;color:#222;line-height:13px;color:#333">Aparas</div>
 <div class="a" style="left:11.8px;top:417.5px;width:0;height:0;border-top:4.5px solid transparent;border-bottom:4.5px solid transparent;border-left:5px solid #222"></div>
 <div class="a nw" style="left:22.0px;top:415.5px;color:#222;line-height:13px;color:#333">Observações</div>
 <div class="a" style="left:11.8px;top:436.5px;width:0;height:0;border-top:4.5px solid transparent;border-bottom:4.5px solid transparent;border-left:5px solid #222"></div>
 <div class="a nw" style="left:22.0px;top:434.5px;color:#222;line-height:13px;color:#333">Observações</div>
 <div class="a" style="left:11.8px;top:455.5px;width:0;height:0;border-top:4.5px solid transparent;border-bottom:4.5px solid transparent;border-left:5px solid #222"></div>
 <div class="a nw" style="left:22.0px;top:453.5px;color:#222;line-height:13px;color:#333">Anexos</div>
 <div class="a" style="left:3px;top:488px;width:80px;height:28px;background:#7db80a;border-radius:4px"></div>
 <div class="a nw" style="left:12px;top:494px;font-size:15px;font-weight:bold;color:#fff;line-height:17px">Salvar</div>
 <div class="a nw" style="right:19px;top:489px;color:#333;line-height:13px;text-align:right;letter-spacing:0.14px">Criado em 25/10/2022 13:31:05 por Samuel Gonçalves.<br>Alterado em 18/12/2023 08:49:55 por Samuel Gonçalves.</div>
 <div class="a" id="menu" style="left:58.30000000000001px;top:50px;width:302px;height:500px;background:#eff0f2;border:1px solid #b9bdc3;border-top:none;box-shadow:2px 1px 2px rgba(0,0,0,.28)">
  <div class="a nw" style="left:5.5px;top:4.3px;color:#333;line-height:13px">Estoque</div>
  <div class="a nw" style="right:9px;top:4.3px;color:#333;line-height:13px">Alt+Q</div>
  <div class="a nw" style="left:5.5px;top:23.3px;color:#333;line-height:13px">Ficha de estoque</div>
  <div class="a nw" style="right:9px;top:23.3px;color:#333;line-height:13px">Ctrl+Q</div>
  <div class="a nw" style="left:5.5px;top:42.3px;color:#333;line-height:13px">Movimentações de estoque</div>
  <div class="a nw" style="right:9px;top:42.3px;color:#333;line-height:13px">Alt+M</div>
  <div class="a" style="left:0;top:58px;width:300px;height:1px;background:#c9ccd1"></div>
  <div class="a nw" style="left:5.5px;top:65.3px;color:#333;line-height:13px">Roteiro do item</div>
  <div class="a nw" style="right:9px;top:65.3px;color:#333;line-height:13px">Ctrl+R</div>
  <div class="a nw" style="left:5.5px;top:84.3px;color:#333;line-height:13px">Estrutura de produto</div>
  <div class="a nw" style="right:9px;top:84.3px;color:#333;line-height:13px">Ctrl+I</div>
  <div class="a nw" style="left:5.5px;top:103.3px;color:#333;line-height:13px">Estrutura multinível</div>
  <div class="a nw" style="right:9px;top:103.3px;color:#333;line-height:13px">Alt+Y</div>
  <div class="a nw" style="left:5.5px;top:122.3px;color:#333;line-height:13px">Itens-pai</div>
  <div class="a nw" style="right:9px;top:122.3px;color:#333;line-height:13px">Alt+Shift+T</div>
  <div class="a nw" style="left:5.5px;top:141.3px;color:#333;line-height:13px">Aparas do item</div>
  <div class="a" style="left:0;top:157px;width:300px;height:1px;background:#c9ccd1"></div>
  <div class="a nw" style="left:5.5px;top:164.3px;color:#333;line-height:13px">Centro de trabalho</div>
  <div class="a" style="left:0;top:180px;width:300px;height:1px;background:#c9ccd1"></div>
  <div class="a nw" style="left:5.5px;top:187.3px;color:#333;line-height:13px">Últimas notas fiscais</div>
  <div class="a nw" style="right:9px;top:187.3px;color:#333;line-height:13px">Alt+Shift+N</div>
  <div class="a nw" style="left:5.5px;top:206.3px;color:#333;line-height:13px">Últimos pedidos de venda</div>
  <div class="a nw" style="right:9px;top:206.3px;color:#333;line-height:13px">Alt+Shift+V</div>
  <div class="a nw" style="left:5.5px;top:225.3px;color:#333;line-height:13px">Últimas propostas de venda</div>
  <div class="a nw" style="right:9px;top:225.3px;color:#333;line-height:13px">Alt+Shift+W</div>
  <div class="a" style="left:0;top:241px;width:300px;height:1px;background:#c9ccd1"></div>
  <div class="a nw" style="left:5.5px;top:248.3px;color:#333;line-height:13px">Histórico do preço de venda</div>
  <div class="a nw" style="left:5.5px;top:267.3px;color:#333;line-height:13px">Tabelas de preços do item</div>
  <div class="a" style="left:0;top:283px;width:300px;height:1px;background:#c9ccd1"></div>
  <div class="a" style="left:0;top:286px;width:300px;height:19px;background:#f8dd8c"></div>
  <div class="a nw" style="left:5.5px;top:290.3px;color:#333;line-height:13px">Últimas notas fiscais recebidas</div>
  <div class="a nw" style="right:9px;top:290.3px;color:#333;line-height:13px">Alt+Shift+E</div>
  <div class="a nw" style="left:5.5px;top:309.3px;color:#333;line-height:13px">Últimos pedidos de compra</div>
  <div class="a nw" style="right:9px;top:309.3px;color:#333;line-height:13px">Alt+Shift+C</div>
  <div class="a nw" style="left:5.5px;top:328.3px;color:#333;line-height:13px">Últimas cotações de compra</div>
  <div class="a nw" style="left:5.5px;top:347.3px;color:#333;line-height:13px">Solicitações de compra</div>
  <div class="a nw" style="right:9px;top:347.3px;color:#333;line-height:13px">Alt+S</div>
  <div class="a nw" style="left:5.5px;top:366.3px;color:#333;line-height:13px">Solicitações de recebimento para terceirização</div>
  <div class="a" style="left:0;top:382px;width:300px;height:1px;background:#c9ccd1"></div>
  <div class="a nw" style="left:5.5px;top:389.3px;color:#333;line-height:13px">Histórico do custo de aquisição</div>
  <div class="a" style="left:0;top:405px;width:300px;height:1px;background:#c9ccd1"></div>
  <div class="a nw" style="left:5.5px;top:412.3px;color:#333;line-height:13px">Ordens de produção</div>
  <div class="a nw" style="right:9px;top:412.3px;color:#333;line-height:13px">Alt+O</div>
  <div class="a nw" style="left:5.5px;top:431.3px;color:#333;line-height:13px">Ficha futura</div>
  <div class="a nw" style="right:9px;top:431.3px;color:#333;line-height:13px">Ctrl+U</div>
  <div class="a nw" style="left:5.5px;top:450.3px;color:#333;line-height:13px">Reservas</div>
  <div class="a nw" style="right:9px;top:450.3px;color:#333;line-height:13px">Alt+J</div>
  <div class="a nw" style="left:5.5px;top:469.3px;color:#333;line-height:13px">Vínculos</div>
 </div>
 <div class="a" style="left:57.19999999999999px;top:29.2px;width:78.5px;height:21.3px;border:3px solid #f5000a;border-radius:2px"></div>
 <div class="a" style="left:55.30000000000001px;top:332.5px;width:305px;height:26.5px;border:3px solid #f5000a;border-radius:2px"></div>
</div>
</body></html>
